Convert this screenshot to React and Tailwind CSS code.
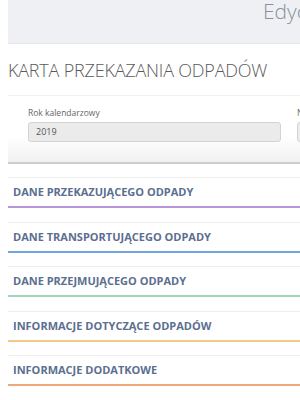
export default function App() {
  const sections = [
    { title: "DANE PRZEKAZUJĄCEGO ODPADY", border: "border-b-[#b895d8]" },
    { title: "DANE TRANSPORTUJĄCEGO ODPADY", border: "border-b-[#6fa8dc]" },
    { title: "DANE PRZEJMUJĄCEGO ODPADY", border: "border-b-[#9ed8b8]" },
    { title: "INFORMACJE DOTYCZĄCE ODPADÓW", border: "border-b-[#f1c98a]" },
    { title: "INFORMACJE DODATKOWE", border: "border-b-[#f0a87c]" },
  ];

  return (
    <div className="w-[300px] h-[400px] overflow-hidden bg-white font-['Open_Sans',sans-serif]">
      <div className="w-[600px] pl-2">
        <div className="h-[44px] bg-[#eff0f4] border-b border-[#e4e5ea] pl-[255px]">
          <span className="block text-[21px] leading-[22px] font-light text-[#8b909a]">Edycja</span>
        </div>

        <h1 className="mt-[15px] text-[18px] leading-[22px] font-light text-[#5a5a5a] tracking-[-0.2px]">
          KARTA PRZEKAZANIA ODPADÓW
        </h1>

        <div className="mt-[14px] border-t border-t-[#f0f0f0] border-b-2 border-b-[#cdcdcd] bg-gradient-to-b from-white from-60% to-[#f1f1f1] pl-[20px] pt-[12px] pb-[20px]">
          <div className="flex gap-[16px]">
            <div className="w-[253px] shrink-0">
              <div className="text-[8.5px] leading-[10px] text-[#666]">Rok kalendarzowy</div>
              <div className="mt-[4px] h-[20px] rounded-[3px] border border-[#d3d3d3] bg-[#ebebeb] pl-[7px] text-[9px] leading-[18px] text-[#555]">
                2019
              </div>
            </div>
            <div className="w-[253px] shrink-0">
              <div className="text-[8.5px] leading-[10px] text-[#666]">Numer</div>
              <div className="mt-[4px] h-[20px] rounded-[3px] border border-[#d3d3d3] bg-[#ebebeb]"></div>
            </div>
          </div>
        </div>

        <div className="mt-[13px] flex flex-col gap-[13.5px]">
          {sections.map((s) => (
            <div
              key={s.title}
              className={`h-[31px] border-t border-t-[#eeeeee] border-b-2 bg-white pl-[5px] ${s.border}`}
            >
              <span className="block pt-[7px] text-[11px] leading-[14px] font-bold text-[#5b6f90]">
                {s.title}
              </span>
            </div>
          ))}
        </div>
      </div>
    </div>
  );
}
